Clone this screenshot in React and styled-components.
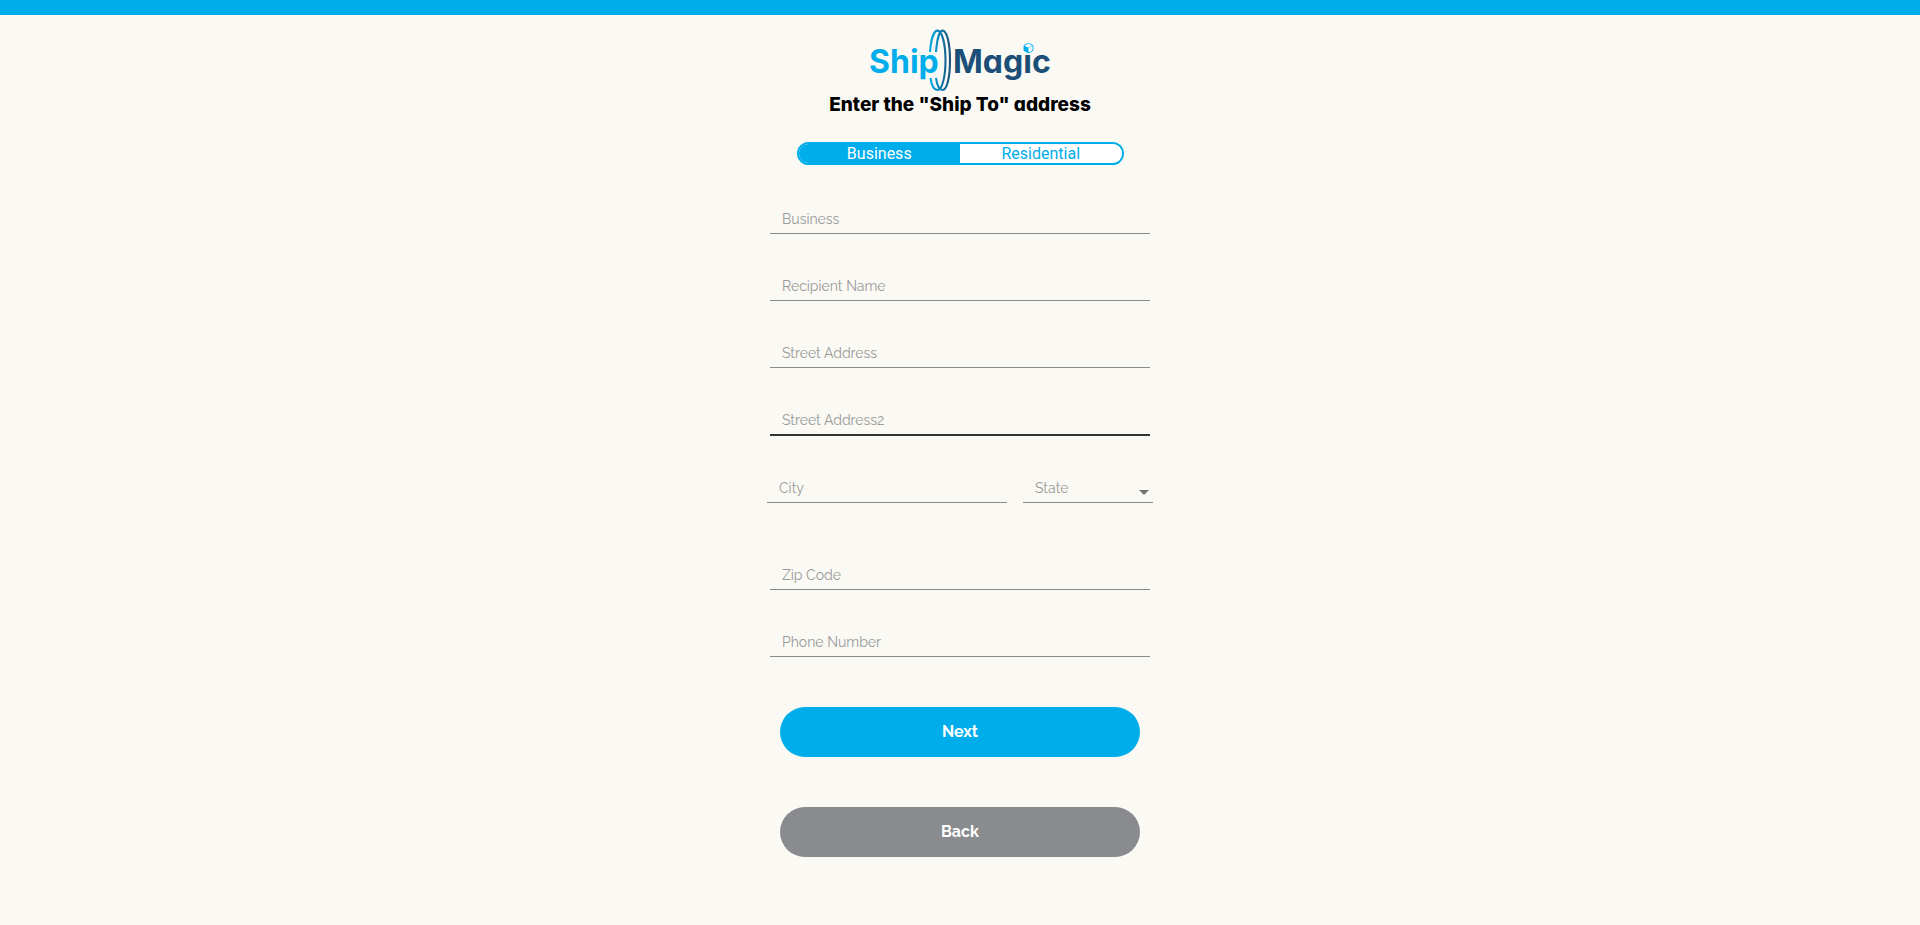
import React, { useState } from "react";
import styled, { createGlobalStyle, css } from "styled-components";

const blue = "#00adeb";
const paper = "#faf9f4";
const bodyFont = `Raleway, Lato, "Liberation Sans", sans-serif`;

const GlobalStyle = createGlobalStyle`
  *, *::before, *::after { box-sizing: border-box; }
  body { margin: 0; background: ${paper}; font-family: ${bodyFont}; }
`;

const TopBar = styled.header`
  height: 15px;
  background: ${blue};
`;

const Page = styled.main`
  display: flex;
  flex-direction: column;
  align-items: center;
  padding: 13px 16px 60px;
`;

const LogoMark = styled.svg`
  display: block;
  width: 184px;
  height: 64px;
`;

const LogoText = styled.text`
  font-family: Inter, sans-serif;
  font-size: 32px;
  font-weight: 700;
  font-feature-settings: "cv11";
`;

const Title = styled.h1`
  margin: 0;
  font-family: Inter, sans-serif;
  font-size: 19px;
  font-weight: 800;
  font-feature-settings: "cv11";
  line-height: 26px;
  color: #000;
  text-align: center;
`;

const Form = styled.form`
  display: flex;
  flex-direction: column;
  align-items: center;
  width: 100%;
`;

const Toggle = styled.div`
  display: flex;
  width: 100%;
  max-width: 327px;
  height: 23px;
  margin-top: 24px;
  border: 2px solid ${blue};
  border-radius: 12px;
  background: #fff;
  overflow: hidden;
`;

const ToggleButton = styled.button`
  flex: 1;
  padding: 0;
  border: 0;
  background: ${(p) => (p.$active ? blue : "#fff")};
  color: ${(p) => (p.$active ? "#fff" : blue)};
  font: 400 16px/19px Roboto, sans-serif;
  cursor: pointer;
`;

const Fields = styled.div`
  display: flex;
  flex-direction: column;
  align-items: center;
  gap: 20px;
  width: 100%;
  max-width: 386px;
  margin-top: 22px;
`;

const control = css`
  display: block;
  width: 100%;
  height: 47px;
  padding: 18px 12px 0;
  border: 0;
  border-bottom: 1px solid #8a8b8f;
  border-radius: 0;
  outline: 0;
  background: transparent;
  color: #333;
  font: 400 14px/20px ${bodyFont};
`;

const Input = styled.input`
  ${control}
  ${(p) => p.$strong && "height: 48px; border-bottom: 2px solid #333;"}
  &::placeholder { color: #999; opacity: 1; }
`;

const Field = styled.div`
  width: 100%;
  padding: 0 3px;
`;

const CityRow = styled.div`
  display: grid;
  grid-template-columns: 240fr 130fr;
  gap: 16px;
  width: 100%;
  margin-bottom: 20px;
`;

const SelectBox = styled.div`
  position: relative;
`;

const Select = styled.select`
  ${control}
  appearance: none;
  color: #999;
`;

const Arrow = styled.svg`
  position: absolute;
  right: 4px;
  bottom: 8px;
  pointer-events: none;
`;

const Button = styled.button`
  width: 100%;
  max-width: 360px;
  height: 50px;
  margin-top: 50px;
  border: 0;
  border-radius: 25px;
  background: ${(p) => (p.$secondary ? "#8a8b8f" : blue)};
  color: #fff;
  font: 700 16px/20px ${bodyFont};
  cursor: pointer;
`;

function Logo() {
  return (
    <LogoMark viewBox="0 0 184 64" role="img" aria-label="Ship Magic">
      <defs>
        <linearGradient id="ring" gradientUnits="userSpaceOnUse" x1="61" y1="0" x2="83" y2="0">
          <stop offset="0" stopColor="#00adeb" />
          <stop offset="1" stopColor="#1d5078" />
        </linearGradient>
      </defs>
      <LogoText x="1" y="45" fill={blue}>Ship</LogoText>
      <LogoText x="85" y="45" fill="#1c4f78">Magic</LogoText>
      <g fill="none" stroke="url(#ring)" strokeWidth="2.1">
        <path d="M62 24C63 11 66 2.600 69.500 2.600C74 2.600 77.500 16 77.500 32.500C77.500 49 74 62 69.500 62C66 62 63.500 57 62.500 50" />
        <path d="M68 24C69 11 71.500 2.600 74.500 2.600C79 2.600 82 16 82 32.500C82 49 79 62 74.500 62C71.500 62 69 57 68 50" />
      </g>
      <path d="M153 14h14v11.500h-14z" fill={paper} />
      <path d="M160.500 15.300L165 17.500V22.500L160.500 25L156 22.500V17.500Z" fill="#fff" stroke={blue} strokeWidth=".9" />
      <path d="M156 17.500L160.500 19.700V25L156 22.500Z" fill={blue} />
      <path d="M160.500 19.700L165 17.500" stroke={blue} strokeWidth=".6" />
    </LogoMark>
  );
}

function TextField({ label, strong }) {
  return (
    <Field>
      <Input type="text" aria-label={label} placeholder={label} $strong={strong} />
    </Field>
  );
}

export default function App() {
  const [kind, setKind] = useState("Business");
  return (
    <>
      <GlobalStyle />
      <TopBar />
      <Page>
        <Logo />
        <Title>Enter the "Ship To" address</Title>
        <Form onSubmit={(e) => e.preventDefault()}>
          <Toggle role="group" aria-label="Address type">
            {["Business", "Residential"].map((name) => (
              <ToggleButton
                key={name}
                type="button"
                aria-pressed={kind === name}
                $active={kind === name}
                onClick={() => setKind(name)}
              >
                {name}
              </ToggleButton>
            ))}
          </Toggle>
          <Fields>
            <TextField label="Business" />
            <TextField label="Recipient Name" />
            <TextField label="Street Address" />
            <TextField label="Street Address2" strong />
            <CityRow>
              <Input type="text" aria-label="City" placeholder="City" />
              <SelectBox>
                <Select aria-label="State" defaultValue="">
                  <option value="" disabled>State</option>
                  <option>CA</option>
                  <option>NY</option>
                  <option>TX</option>
                </Select>
                <Arrow width="10" height="5" viewBox="0 0 10 5" aria-hidden="true">
                  <path d="M0 0h10L5 5z" fill="#737373" />
                </Arrow>
              </SelectBox>
            </CityRow>
            <TextField label="Zip Code" />
            <TextField label="Phone Number" />
          </Fields>
          <Button type="submit">Next</Button>
          <Button type="button" $secondary>Back</Button>
        </Form>
      </Page>
    </>
  );
}
